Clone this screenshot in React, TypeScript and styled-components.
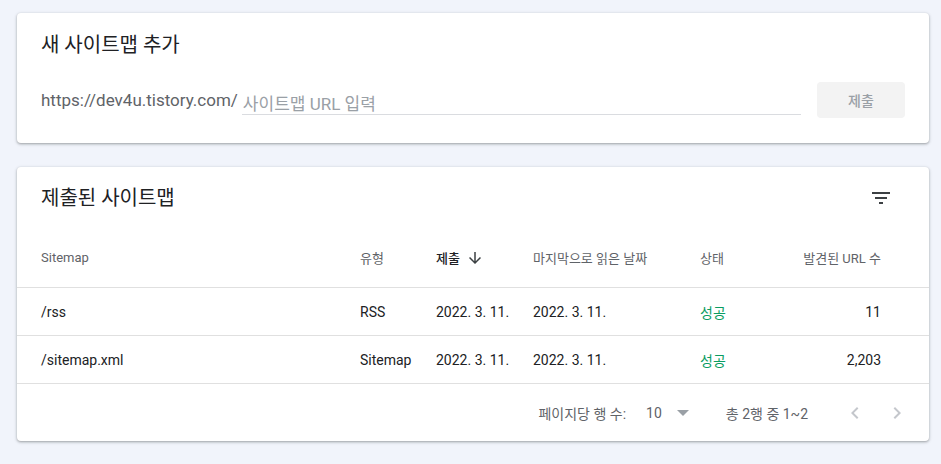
import React from "react";
import styled, { createGlobalStyle } from "styled-components";

const Global = createGlobalStyle`
  html, body { margin: 0; padding: 0; background: #f1f4fb; }
  body {
    font-family: Roboto, "Noto Sans CJK KR", "Noto Sans", sans-serif;
    color: #202124;
    -webkit-font-smoothing: antialiased;
  }
  * { box-sizing: border-box; }
`;

const Page = styled.div`
  display: flex;
  flex-direction: column;
  gap: 24px;
  padding: 13px 12px 24px 17px;
`;

const Card = styled.section`
  background: #fff;
  border-radius: 4px;
  box-shadow: 0 1px 2px rgba(60, 64, 67, 0.3), 0 1px 3px 1px rgba(60, 64, 67, 0.15);
`;

const AddCard = styled(Card)`
  padding: 18px 24px 25px 24px;
`;

const Title = styled.h2`
  margin: 0;
  font-size: 20px;
  font-weight: 400;
  line-height: 28px;
  color: #202124;
`;

const InputRow = styled.div`
  display: flex;
  align-items: center;
  margin-top: 23px;
  height: 36px;
`;

const Prefix = styled.span`
  font-size: 17px;
  color: #5f6368;
  white-space: nowrap;
`;

const UrlInput = styled.input`
  flex: 1;
  margin-left: 4px;
  align-self: flex-end;
  margin-bottom: 3px;
  height: 26px;
  border: none;
  border-bottom: 1px solid #dadce0;
  outline: none;
  padding: 4px 1px 0 1px;
  font-family: inherit;
  font-size: 17px;
  color: #202124;
  background: transparent;
  &::placeholder { color: #9aa0a6; }
`;

const SubmitButton = styled.button`
  margin-left: 16px;
  width: 88px;
  height: 36px;
  border: none;
  border-radius: 4px;
  background: #f3f3f3;
  color: #9aa0a6;
  font-family: inherit;
  font-size: 14px;
  font-weight: 500;
`;

const ListHeader = styled.div`
  display: flex;
  align-items: center;
  justify-content: space-between;
  height: 61px;
  padding: 1px 36px 0 24px;
`;

const IconButton = styled.span<{ $muted?: boolean }>`
  display: flex;
  align-items: center;
  justify-content: center;
  width: 24px;
  height: 24px;
  color: ${(p) => (p.$muted ? "#c4c7cc" : "#3c4043")};
`;

const Row = styled.div<{ $head?: boolean }>`
  display: grid;
  grid-template-columns: 319px 76px 97px 167px 1fr 100px;
  align-items: center;
  height: ${(p) => (p.$head ? "60px" : "48px")};
  padding: 0 48px 0 24px;
  border-bottom: 1px solid #e0e0e0;
  font-size: ${(p) => (p.$head ? "13px" : "14px")};
  color: ${(p) => (p.$head ? "#5f6368" : "#202124")};
`;

const Cell = styled.div<{ $right?: boolean; $status?: boolean; $active?: boolean }>`
  display: flex;
  align-items: center;
  justify-content: ${(p) => (p.$right ? "flex-end" : "flex-start")};
  color: ${(p) => (p.$status ? "#0a9d62" : p.$active ? "#202124" : "inherit")};
  font-weight: ${(p) => (p.$active ? 500 : 400)};
  white-space: nowrap;
`;

const SortIcon = styled.span`
  display: inline-flex;
  margin-left: 6px;
  color: #3c4043;
`;

const Footer = styled.div`
  display: flex;
  align-items: center;
  justify-content: flex-end;
  height: 57px;
  padding-right: 20px;
  font-size: 14px;
  color: #5f6368;
`;

const PerPage = styled.div`
  display: flex;
  align-items: center;
  margin-left: 20px;
  font-size: 14px;
  color: #5f6368;
  gap: 9px;
`;

const Range = styled.span`
  margin-left: 31px;
  margin-right: 35px;
`;

const Pager = styled.div`
  display: flex;
  gap: 18px;
`;

const FilterIcon = () => (
  <svg width="24" height="24" viewBox="0 0 24 24" fill="currentColor">
    <path d="M10 18h4v-2h-4v2zM3 6v2h18V6H3zm3 7h12v-2H6v2z" />
  </svg>
);

const ArrowDown = () => (
  <svg width="18" height="18" viewBox="0 0 24 24" fill="currentColor">
    <path d="M20 12l-1.41-1.41L13 16.17V4h-2v12.17l-5.58-5.59L4 12l8 8 8-8z" />
  </svg>
);

const DropArrow = () => (
  <svg width="24" height="24" viewBox="0 0 24 24" fill="#9aa0a6">
    <path d="M6 10l6 6 6-6z" transform="translate(0 -1)" />
  </svg>
);

const ChevronLeft = () => (
  <svg width="24" height="24" viewBox="0 0 24 24" fill="currentColor">
    <path d="M15.41 7.41L14 6l-6 6 6 6 1.41-1.41L10.83 12z" />
  </svg>
);

const ChevronRight = () => (
  <svg width="24" height="24" viewBox="0 0 24 24" fill="currentColor">
    <path d="M10 6L8.59 7.41 13.17 12l-4.58 4.59L10 18l6-6z" />
  </svg>
);

const rows = [
  { path: "/rss", type: "RSS", submitted: "2022. 3. 11.", read: "2022. 3. 11.", status: "성공", urls: "11" },
  { path: "/sitemap.xml", type: "Sitemap", submitted: "2022. 3. 11.", read: "2022. 3. 11.", status: "성공", urls: "2,203" },
];

export default function App() {
  return (
    <>
      <Global />
      <Page>
        <AddCard>
          <Title>새 사이트맵 추가</Title>
          <InputRow>
            <Prefix>https://dev4u.tistory.com/</Prefix>
            <UrlInput placeholder="사이트맵 URL 입력" />
            <SubmitButton>제출</SubmitButton>
          </InputRow>
        </AddCard>
        <Card>
          <ListHeader>
            <Title>제출된 사이트맵</Title>
            <IconButton>
              <FilterIcon />
            </IconButton>
          </ListHeader>
          <Row $head>
            <Cell>Sitemap</Cell>
            <Cell>유형</Cell>
            <Cell $active>
              제출
              <SortIcon>
                <ArrowDown />
              </SortIcon>
            </Cell>
            <Cell>마지막으로 읽은 날짜</Cell>
            <Cell>상태</Cell>
            <Cell $right>발견된 URL 수</Cell>
          </Row>
          {rows.map((r) => (
            <Row key={r.path}>
              <Cell>{r.path}</Cell>
              <Cell>{r.type}</Cell>
              <Cell>{r.submitted}</Cell>
              <Cell>{r.read}</Cell>
              <Cell $status>{r.status}</Cell>
              <Cell $right>{r.urls}</Cell>
            </Row>
          ))}
          <Footer>
            <span>페이지당 행 수:</span>
            <PerPage>
              <span>10</span>
              <DropArrow />
            </PerPage>
            <Range>총 2행 중 1~2</Range>
            <Pager>
              <IconButton $muted>
                <ChevronLeft />
              </IconButton>
              <IconButton $muted>
                <ChevronRight />
              </IconButton>
            </Pager>
          </Footer>
        </Card>
      </Page>
    </>
  );
}
